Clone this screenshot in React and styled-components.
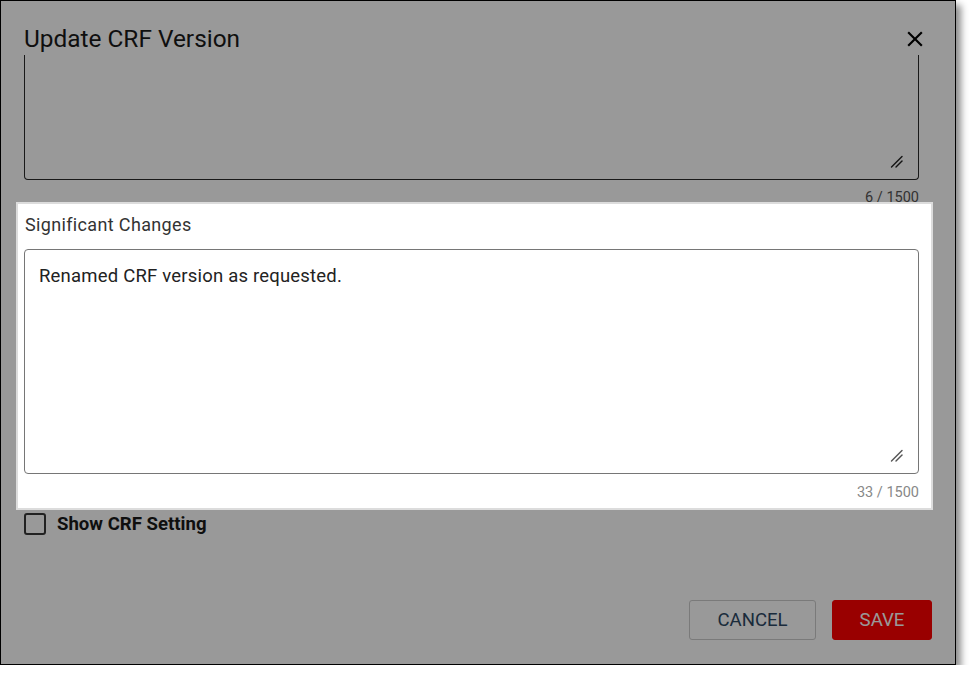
import React from "react";
import styled, { createGlobalStyle } from "styled-components";

const Global = createGlobalStyle`
  html, body { margin: 0; padding: 0; background: #ffffff; }
  body { font-family: Roboto, "Liberation Sans", Arial, sans-serif; }
  * { box-sizing: border-box; }
`;

const Frame = styled.div`
  position: relative;
  width: 956px;
  height: 665px;
  border: 1px solid #000;
  background: #ffffff;
  box-shadow: 5px 5px 7px rgba(0, 0, 0, 0.45);
  display: flex;
  flex-direction: column;
`;

const Dim = styled.div`
  position: absolute;
  inset: 0;
  background: rgba(0, 0, 0, 0.4);
  z-index: 1;
  pointer-events: none;
`;

const Header = styled.div`
  display: flex;
  align-items: center;
  justify-content: space-between;
  padding: 22px 27px 0 23px;
  height: 54px;
`;

const Title = styled.h2`
  margin: 0;
  font-size: 24.4px;
  line-height: 32px;
  font-weight: 400;
  color: #1a1a1a;
`;

const CloseButton = styled.button`
  border: 0;
  background: transparent;
  padding: 0;
  width: 26px;
  height: 26px;
  display: flex;
  align-items: center;
  justify-content: center;
  color: #000;
  cursor: pointer;
  margin-top: -1px;
`;

const Body = styled.div`
  display: flex;
  flex-direction: column;
  padding: 0 36px 0 23px;
`;

const StubField = styled.div`
  position: relative;
  height: 125px;
  border: 1px solid #2a2a2a;
  border-top: 0;
  border-radius: 0 0 4px 4px;
  padding: 0 14px 16px;
  display: flex;
  align-items: flex-end;
`;

const Field = styled.div`
  position: relative;
  margin-top: 12px;
  height: 225px;
  border: 1px solid #767676;
  border-radius: 4px;
  padding: 14px 14px 12px;
  background: #fff;
  display: flex;
`;

const Area = styled.textarea`
  display: block;
  width: 100%;
  height: ${(p) => p.$h}px;
  border: 0;
  outline: none;
  padding: 0;
  margin: 0;
  background: transparent;
  resize: none;
  font-family: Roboto, "Liberation Sans", Arial, sans-serif;
  font-size: 18.5px;
  letter-spacing: 0.2px;
  line-height: 24px;
  color: #222;
`;

const Grip = styled.svg`
  position: absolute;
  right: 15px;
  bottom: 11px;
  width: 13px;
  height: 13px;
  color: ${(p) => p.$c};
  pointer-events: none;
`;

const Counter = styled.div`
  margin-top: ${(p) => p.$mt}px;
  margin-bottom: ${(p) => p.$mb || 0}px;
  text-align: right;
  font-size: 14.5px;
  line-height: 14px;
  color: ${(p) => p.$c};
`;

const Highlight = styled.section`
  position: relative;
  z-index: 2;
  margin: 0 -14px 0 -8px;
  border: 2px solid #dcdcdc;
  background: #ffffff;
  padding: 9px 12px 8px 6px;
  display: flex;
  flex-direction: column;
`;

const Label = styled.label`
  font-size: 18px;
  letter-spacing: 0.35px;
  line-height: 24px;
  color: #333;
  padding-left: 1px;
`;

const CheckRow = styled.label`
  margin-top: 3px;
  display: flex;
  align-items: center;
  gap: 11px;
  font-size: 18.6px;
  font-weight: 700;
  line-height: 22px;
  color: #1a1a1a;
`;

const Box = styled.span`
  width: 22px;
  height: 22px;
  border: 2px solid #3a3a3a;
  border-radius: 3px;
  background: #fff;
`;

const Actions = styled.div`
  margin-top: auto;
  display: flex;
  justify-content: flex-end;
  gap: 16px;
  padding: 0 23px 24px 0;
`;

const Button = styled.button`
  height: 40px;
  width: ${(p) => p.$w}px;
  border-radius: 3px;
  font-family: Roboto, "Liberation Sans", Arial, sans-serif;
  font-size: 18.6px;
  font-weight: 400;
  cursor: pointer;
  border: 1px solid ${(p) => (p.$primary ? "#ff0000" : "#cccccc")};
  background: ${(p) => (p.$primary ? "#ff0000" : "#ffffff")};
  color: ${(p) => (p.$primary ? "#ffffff" : "#2d4864")};
`;

const ResizeGrip = ({ color }) => (
  <Grip $c={color} viewBox="0 0 13 13" fill="none" stroke="currentColor" strokeWidth="1.4" strokeLinecap="round">
    <path d="M1.5 12 L12 1.5" />
    <path d="M6 12 L12 6" />
  </Grip>
);

export default function App() {
  return (
    <>
      <Global />
      <Frame>
        <Header>
          <Title>Update CRF Version</Title>
          <CloseButton aria-label="close">
            <svg width="26" height="26" viewBox="0 0 24 24" fill="currentColor">
              <path d="M19 6.41 17.59 5 12 10.59 6.41 5 5 6.41 10.59 12 5 17.59 6.41 19 12 13.41 17.59 19 19 17.59 13.41 12z" />
            </svg>
          </CloseButton>
        </Header>
        <Body>
          <StubField>
            <Area $h={60} defaultValue="" />
            <ResizeGrip color="#222" />
          </StubField>
          <Counter $mt={11} $mb={-3} $c="#555">6 / 1500</Counter>
          <Highlight>
            <Label>Significant Changes</Label>
            <Field>
              <Area $h={197} defaultValue="Renamed CRF version as requested." />
              <ResizeGrip color="#555" />
            </Field>
            <Counter $mt={12} $c="#888">33 / 1500</Counter>
          </Highlight>
          <CheckRow>
            <Box />
            Show CRF Setting
          </CheckRow>
        </Body>
        <Actions>
          <Button $w={127}>CANCEL</Button>
          <Button $w={100} $primary>SAVE</Button>
        </Actions>
        <Dim />
      </Frame>
    </>
  );
}
